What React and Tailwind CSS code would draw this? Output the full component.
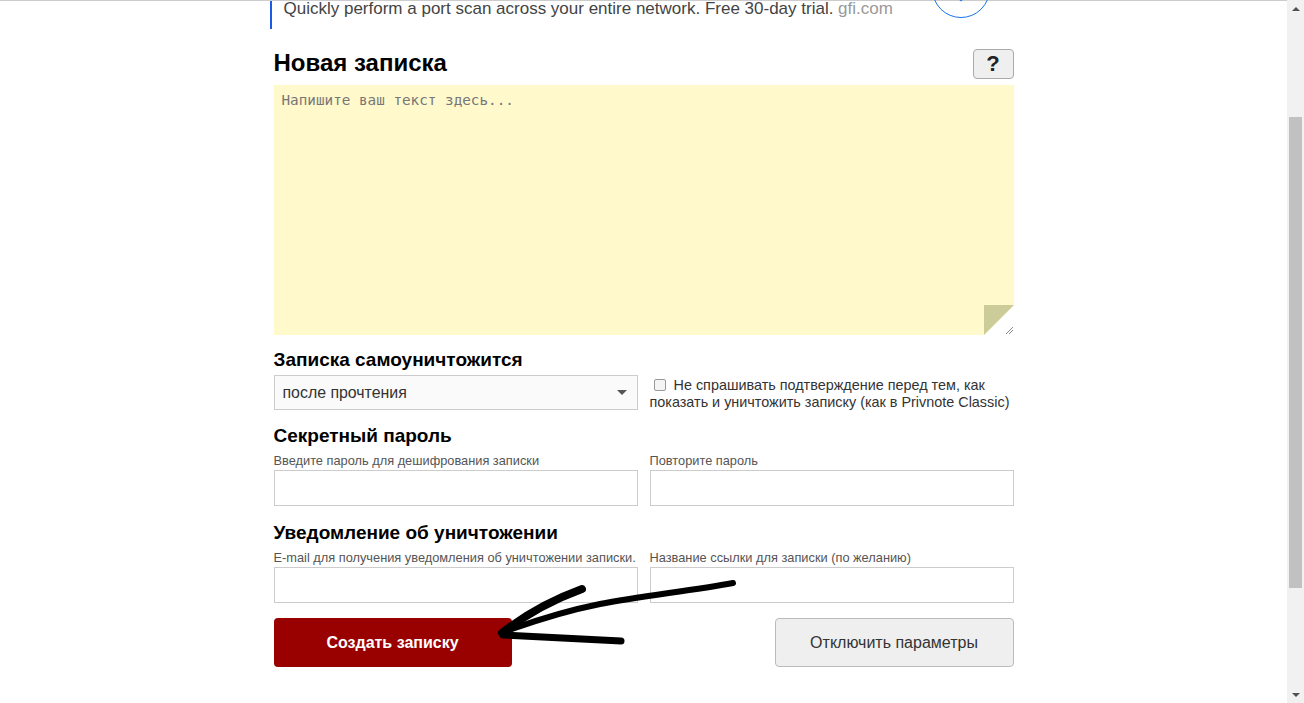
import { ChevronDown } from 'lucide-react'

function Field({ label }) {
  return (
    <div>
      <p className="text-[12.8px] leading-[14px] text-[#555] mb-[2px]">{label}</p>
      <div className="h-[36px] border border-[#ccc] bg-white" />
    </div>
  )
}

function Heading({ children, className = '' }) {
  return <h2 className={`text-[19px] leading-[22px] font-bold text-black ${className}`}>{children}</h2>
}

function Scrollbar() {
  return (
    <div className="w-[17px] h-full bg-[#f1f1f1] flex flex-col items-center">
      <div className="h-[17px] flex items-center justify-center">
        <div className="w-0 h-0 border-x-[4px] border-x-transparent border-b-[4px] border-b-[#505050]" />
      </div>
      <div className="h-[100px]" />
      <div className="w-[13px] h-[471px] bg-[#c1c1c1]" />
      <div className="flex-1" />
      <div className="h-[17px] flex items-center justify-center">
        <div className="w-0 h-0 border-x-[4px] border-x-transparent border-t-[4px] border-t-[#505050]" />
      </div>
    </div>
  )
}

export default function App() {
  return (
    <div className="flex w-full h-[703px] overflow-hidden bg-white font-['Liberation_Sans',Arial,sans-serif] text-[#333]">
      <div className="relative flex-1 border-t border-[#ccc]">
        <div className="mx-auto w-[740px]">
          {/* Ad strip */}
          <div className="-ml-[4px] h-[28px] flex items-start justify-between border-l-2 border-[#1a5ce6] pl-[12px] pr-[24px]">
            <p className="text-[17px] leading-[18px] -mt-[1px] text-[#444]">
              Quickly perform a port scan across your entire network. Free 30-day trial. <span className="text-[#999]">gfi.com</span>
            </p>
            <div className="-mt-[41px] w-[58px] h-[58px] rounded-full border border-[#1a73e8] flex items-end justify-center pb-[12px]">
              <ChevronDown size={12} strokeWidth={3} className="text-[#1a73e8]" />
            </div>
          </div>

          {/* Title */}
          <div className="mt-[20px] h-[30px] flex items-center justify-between">
            <h1 className="text-[24px] leading-[28px] font-bold text-black -mt-[2px]">Новая записка</h1>
            <button className="w-[41px] h-[30px] rounded-[4px] border border-[#aaa] bg-[#efefef] text-[22px] font-bold text-[#222] leading-none">?</button>
          </div>

          {/* Note */}
          <div className="relative mt-[6px] h-[250px] bg-[#fff9cc]">
            <p className="pt-[5px] pl-[8px] text-[14.3px] font-['DejaVu_Sans_Mono',monospace] text-[#777]">Напишите ваш текст здесь...</p>
            <svg className="absolute right-0 bottom-0" width="30" height="30" viewBox="0 0 30 30">
              <polygon points="0,30 30,30 30,0" fill="#ffffff" />
              <polygon points="0,0 30,0 0,30" fill="#cccc99" />
              <line x1="22" y1="29" x2="29" y2="22" stroke="#888" strokeWidth="1" />
              <line x1="25" y1="29" x2="29" y2="25" stroke="#888" strokeWidth="1" />
            </svg>
          </div>

          {/* Self-destruct */}
          <Heading className="mt-[14px]">Записка самоуничтожится</Heading>
          <div className="mt-[4px] grid grid-cols-2 gap-[12px]">
            <div className="h-[35px] border border-[#ccc] bg-[#fafafa] flex items-center justify-between pl-[8px] pr-[10px]">
              <span className="text-[15.9px] text-[#333]">после прочтения</span>
              <div className="w-0 h-0 border-x-[5px] border-x-transparent border-t-[5px] border-t-[#555]" />
            </div>
            <p className="pt-[2px] text-[14.4px] leading-[17px] text-[#333]">
              <span className="inline-block align-[-1px] ml-[4px] mr-[8px] w-[12px] h-[12px] rounded-[2px] border border-[#999] bg-[#f4f4f4]" />
              Не спрашивать подтверждение перед тем, как показать и уничтожить записку (как в Privnote Classic)
            </p>
          </div>

          {/* Password */}
          <Heading className="mt-[14px]">Секретный пароль</Heading>
          <div className="mt-[7px] grid grid-cols-2 gap-[12px]">
            <Field label="Введите пароль для дешифрования записки" />
            <Field label="Повторите пароль" />
          </div>

          {/* Notification */}
          <Heading className="mt-[16px]">Уведомление об уничтожении</Heading>
          <div className="mt-[7px] grid grid-cols-2 gap-[12px]">
            <Field label="E-mail для получения уведомления об уничтожении записки." />
            <Field label="Название ссылки для записки (по желанию)" />
          </div>

          {/* Buttons */}
          <div className="mt-[15px] flex justify-between">
            <button className="w-[238px] h-[49px] rounded-[4px] bg-[#990000] text-white text-[16px] font-bold">Создать записку</button>
            <button className="w-[239px] h-[49px] rounded-[4px] border border-[#bbb] bg-[#efefef] text-[16px] text-[#333]">Отключить параметры</button>
          </div>
        </div>

        {/* Hand-drawn arrow */}
        <svg className="absolute left-0 top-0 pointer-events-none" width="1287" height="703" viewBox="0 0 1287 703">
          <g fill="none" stroke="#000" strokeLinecap="round" strokeLinejoin="round">
            <path d="M733,582 C690,590 640,595 600,603 C570,609 540,618 512,628" strokeWidth="6" />
            <path d="M582,588 C560,596 530,610 502,632" strokeWidth="8" />
            <path d="M503,634 C540,636 580,638 621,640" strokeWidth="7" />
          </g>
        </svg>
      </div>
      <Scrollbar />
    </div>
  )
}
